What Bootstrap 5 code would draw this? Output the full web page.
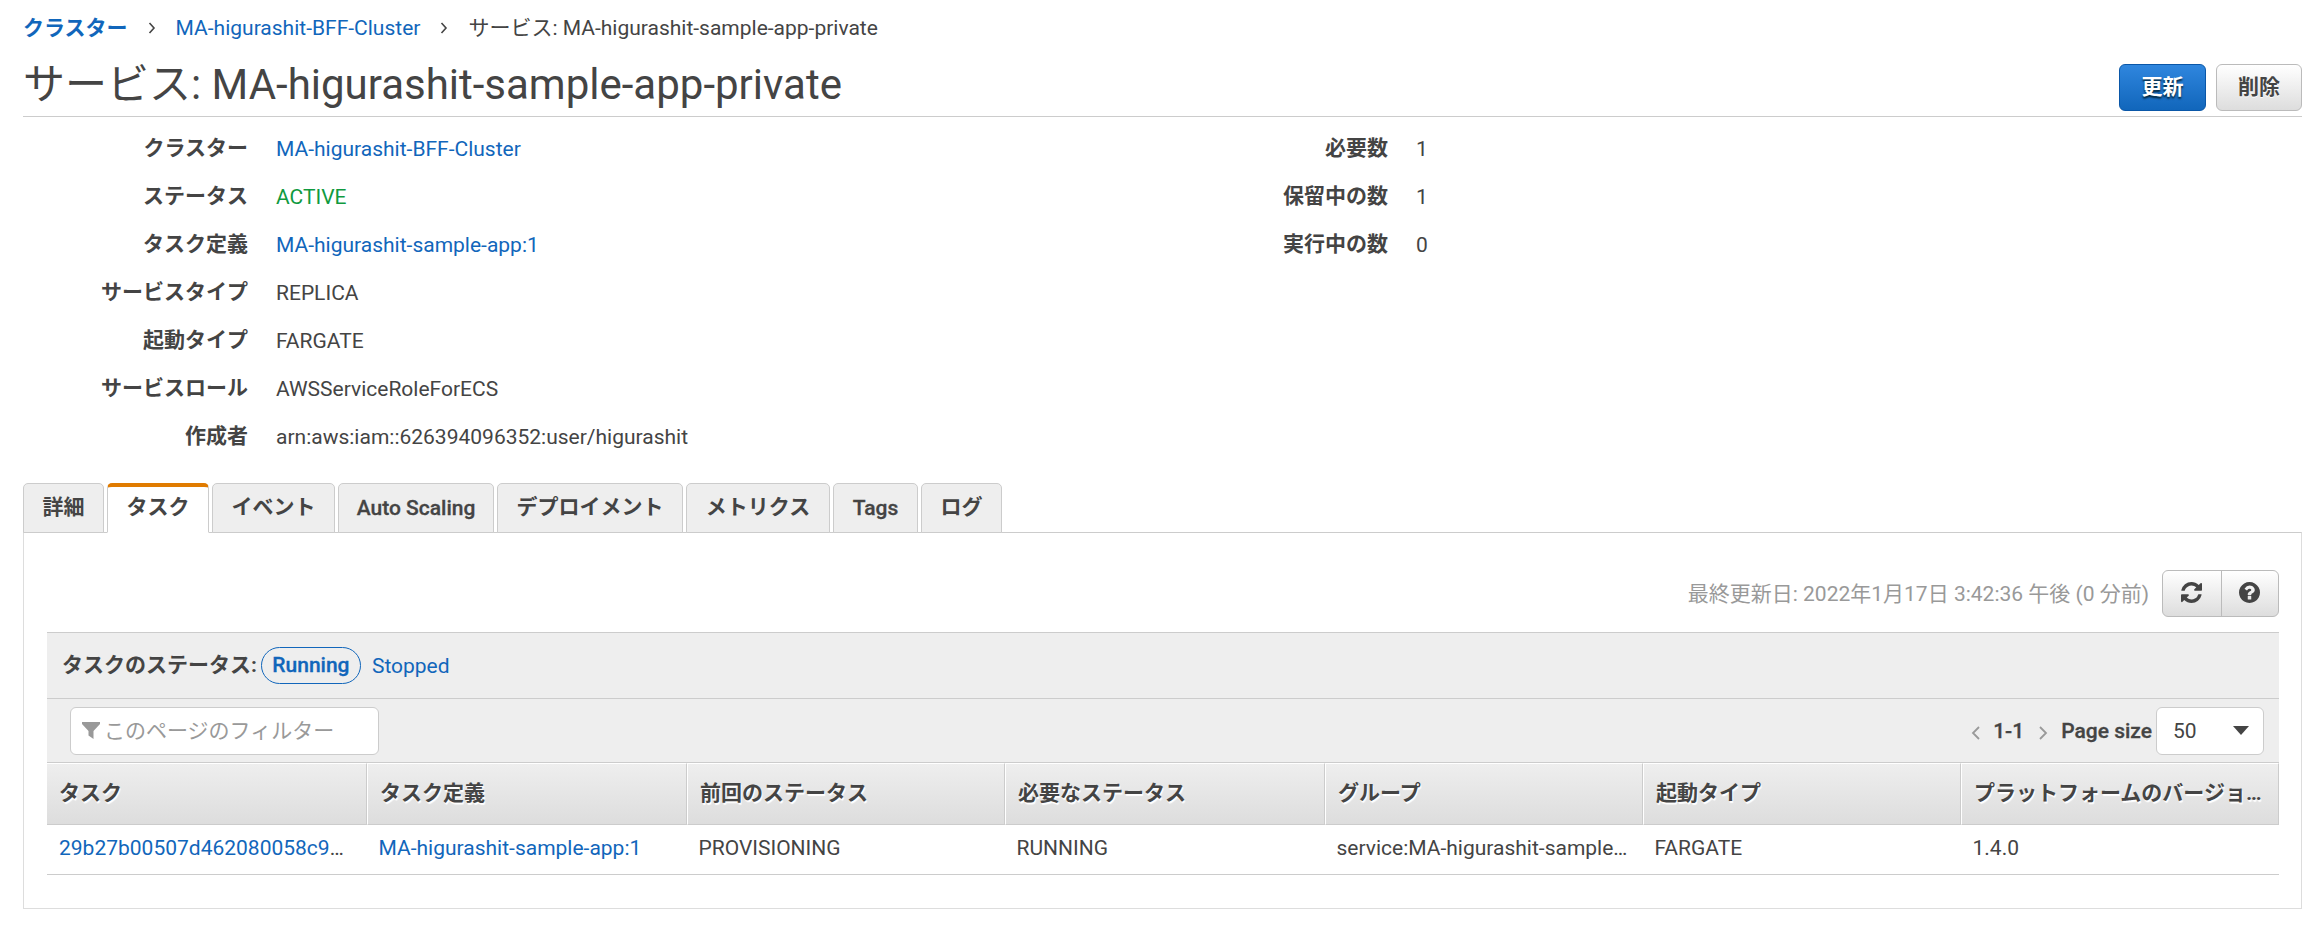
<!DOCTYPE html>
<html lang="ja">
<head>
<meta charset="utf-8">
<meta name="viewport" content="width=device-width, initial-scale=1">
<title>サービス: MA-higurashit-sample-app-private</title>
<link href="https://cdn.jsdelivr.net/npm/bootstrap@5.3.0/dist/css/bootstrap.min.css" rel="stylesheet">
<style>
body{font-family:Roboto,"Noto Sans CJK JP",sans-serif;font-size:21px;line-height:30px;color:#444;background:#fff;overflow:hidden}
a{color:#1166bb;text-decoration:none}
.page{padding:0 6px 0 23px}
.crumbs{height:56px;padding-top:13px}
.crumbs .sep{width:48px;height:30px;display:flex;justify-content:center;align-items:center}
.title-bar{height:61px;border-bottom:1px solid #ccc}
.title-bar h1{font-size:42px;line-height:56px;font-weight:400;margin:0;padding-top:1px}
.aws-btn{height:47px;border:1px solid #bbb;border-radius:6px;background:linear-gradient(#fff,#ddd);color:#444;font-size:21px;font-weight:700;line-height:1;padding:0 21px;text-shadow:0 1px 0 #fff}
.aws-btn.main{width:87px;margin-right:10px;border-color:#0a57a8;background:linear-gradient(#2f86de,#1166bb);color:#fff;text-shadow:0 2px 2px #023}
.facts{padding-top:8px;height:366px}
.facts dl{margin:0}
.facts dt,.facts dd{height:48px;line-height:48px;margin:0}
.facts dt{text-align:right;width:225px;flex:none;line-height:46px}
.facts dd{padding-left:28px}
.c-left{width:1140px}
.ok{color:#109a3f}
.med{font-weight:500;-webkit-text-stroke:.3px}
.svc-tabs{gap:3px;height:50px;margin-bottom:-1px;border:0}
.svc-tabs a{border:1px solid #ccc;border-radius:5px 5px 0 0;background:#eee;color:#444;font-weight:700;height:50px;line-height:46px;padding:0;text-align:center}
.svc-tabs a.med{font-weight:500;line-height:48px}
.svc-tabs a.active{background:#fff;border-top:4px solid #e07b00;border-bottom-color:#fff;line-height:41px}
.panel{border:1px solid #ddd;border-top-color:#ccc;height:377px;padding:37px 22px 0 23px}
.muted{color:#999}
.duo{width:117px;margin-left:13px;border:1px solid #bbb;border-radius:6px;background:linear-gradient(#fff,#ddd);height:47px}
.duo span{display:flex;align-items:center;justify-content:center;width:58px}
.duo span+span{border-left:1px solid #bbb}
.duo svg{margin-top:-2px}
.bar{background:#eee;border-top:1px solid #ccc}
.bar-a{height:66px;padding:0 0 1px 15px;margin-top:15px}
.bar-a .dn{padding-top:1px}
.bar-b{height:64px;padding:0 15px 0 23px}
.pill{border:1px solid #1166bb;border-radius:19px;height:37px;line-height:35px;width:100px;text-align:center;margin:0 11px 0 4px}
.field{background:#fff;border:1px solid #ccc;border-radius:6px;height:48px}
.grid-t{table-layout:fixed;border-collapse:separate;border-spacing:0;width:2232px;margin:0;border-top:1px solid #ccc}
.grid-t th,.grid-t td{white-space:nowrap;padding:0 0 0 12px}
.grid-t th{height:62px;background:linear-gradient(#eee,#ddd);border-top:1px solid #fff;border-bottom:1px solid #ccc;border-right:1px solid #ccc;text-shadow:1px 2px 1px #fff;line-height:56px;padding-bottom:2px}
.grid-t th+th{border-left:1px solid #fff}
.grid-t td{height:50px;border-bottom:1px solid #ccc;padding-bottom:3px}
.grid-t td+td{padding-left:11.5px}
.grid-t tr>:nth-child(-n+2){width:320px}
.grid-t tr>:nth-child(4){width:320px}
</style>
<script src="https://cdn.jsdelivr.net/npm/bootstrap@5.3.0/dist/js/bootstrap.bundle.min.js"></script>
</head>
<body>
<main class="page">
  <nav class="crumbs d-flex">
    <a href="#" class="fw-bold">クラスター</a>
    <span class="sep"><svg width="8" height="12" fill="none" stroke="#444" stroke-width="1.6"><path d="M1.5 1l4.500 5-4.500 5"/></svg></span>
    <a href="#">MA-higurashit-BFF-Cluster</a>
    <span class="sep"><svg width="8" height="12" fill="none" stroke="#444" stroke-width="1.6"><path d="M1.5 1l4.500 5-4.500 5"/></svg></span>
    <span>サービス: MA-higurashit-sample-app-private</span>
  </nav>
  <header class="title-bar d-flex justify-content-between">
    <h1>サービス: MA-higurashit-sample-app-private</h1>
    <div class="d-flex pt-2"><button class="aws-btn main">更新</button><button class="aws-btn">削除</button></div>
  </header>
  <section class="facts d-flex">
    <dl class="c-left">
      <div class="d-flex"><dt>クラスター</dt><dd><a href="#">MA-higurashit-BFF-Cluster</a></dd></div>
      <div class="d-flex"><dt>ステータス</dt><dd class="ok">ACTIVE</dd></div>
      <div class="d-flex"><dt>タスク定義</dt><dd><a href="#">MA-higurashit-sample-app:1</a></dd></div>
      <div class="d-flex"><dt>サービスタイプ</dt><dd>REPLICA</dd></div>
      <div class="d-flex"><dt>起動タイプ</dt><dd>FARGATE</dd></div>
      <div class="d-flex"><dt>サービスロール</dt><dd>AWSServiceRoleForECS</dd></div>
      <div class="d-flex"><dt>作成者</dt><dd>arn:aws:iam::626394096352:user/higurashit</dd></div>
    </dl>
    <dl>
      <div class="d-flex"><dt>必要数</dt><dd>1</dd></div>
      <div class="d-flex"><dt>保留中の数</dt><dd>1</dd></div>
      <div class="d-flex"><dt>実行中の数</dt><dd>0</dd></div>
    </dl>
  </section>
  <nav class="svc-tabs nav">
    <a href="#" style="width:81px">詳細</a>
    <a href="#" class="active" style="width:102px">タスク</a>
    <a href="#" style="width:123px">イベント</a>
    <a href="#" class="med" style="width:156px">Auto Scaling</a>
    <a href="#" style="width:186px">デプロイメント</a>
    <a href="#" style="width:144px">メトリクス</a>
    <a href="#" class="med" style="width:85px">Tags</a>
    <a href="#" style="width:81px">ログ</a>
  </nav>
  <section class="panel">
    <div class="d-flex justify-content-end align-items-center">
      <span class="muted">最終更新日: 2022年1月17日 3:42:36 午後 (0 分前)</span>
      <div class="duo d-flex">
        <span><svg width="21" height="21" viewBox="0 0 1536 1536" fill="#444"><path d="M1511 928q0 5-1 7-64 268-268 434.500T764 1536q-146 0-282.500-55T238 1324l-129 129q-19 19-45 19t-45-19-19-45V960q0-26 19-45t45-19h448q26 0 45 19t19 45-19 45l-137 137q71 66 161 102t187 36q134 0 250-65t186-179q11-17 53-117 8-23 30-23h192q13 0 22.500 9.500t9.500 22.500zm25-800v448q0 26-19 45t-45 19h-448q-26 0-45-19t-19-45 19-45l138-138Q969 256 768 256q-134 0-250 65T332 500q-11 17-53 117-8 23-30 23H50q-13 0-22.500-9.500T18 608v-7q65-268 270-434.500T768 0q146 0 284 55.500T1297 212l130-129q19-19 45-19t45 19 19 45z"/></svg></span>
        <span><svg width="21" height="21" viewBox="0 0 1536 1536" fill="#444"><path d="M896 1248v-192q0-14-9-23t-23-9H672q-14 0-23 9t-9 23v192q0 14 9 23t23 9h192q14 0 23-9t9-23zm256-672q0-88-55.500-163T958 297t-170-41q-243 0-371 213-15 24 8 42l132 100q7 6 19 6 16 0 25-12 53-68 86-92 34-24 86-24 48 0 85.500 26t37.500 59q0 38-20 61t-68 45q-63 28-115.500 86.500T640 892v36q0 14 9 23t23 9h192q14 0 23-9t9-23q0-19 21.500-49.500T972 829q32-18 49-28.500t46-35 44.500-48 28-60.500 12.500-81zm384 192q0 209-103 385.500T1153.500 1433 768 1536t-385.500-103T103 1153.500 0 768t103-385.500T382.500 103 768 0t385.500 103T1433 382.500 1536 768z"/></svg></span>
      </div>
    </div>
    <div class="bar bar-a d-flex align-items-center"><b>タスクのステータス:</b><a href="#" class="pill med">Running</a><a href="#" class="dn">Stopped</a></div>
    <div class="bar bar-b d-flex align-items-center justify-content-between">
      <div class="field muted d-flex align-items-center" style="width:309px;padding-left:11px"><svg width="18" height="17" class="me-1" fill="#999"><path d="M0 0h18v2l-6.500 7v8l-5-3.500V9L0 2z"/></svg><span>このページのフィルター</span></div>
      <div class="d-flex align-items-center">
        <svg width="9" height="14" class="mt-1" fill="none" stroke="#999" stroke-width="1.8"><path d="M8 1L2 7l6 6"/></svg>
        <span class="med" style="margin:0 15px 0 13px">1-1</span>
        <svg width="9" height="14" class="mt-1" fill="none" stroke="#999" stroke-width="1.8"><path d="M1 1l6 6-6 6"/></svg>
        <span class="med" style="margin:0 4px 0 13px">Page size</span>
        <div class="field d-flex align-items-center justify-content-between" style="width:108px;padding:0 14px 0 16px"><span>50</span><svg width="16" height="9" fill="#444"><path d="M0 0h16L8 9z"/></svg></div>
      </div>
    </div>
    <table class="grid-t">
      <thead><tr><th>タスク</th><th>タスク定義</th><th>前回のステータス</th><th>必要なステータス</th><th>グループ</th><th>起動タイプ</th><th>プラットフォームのバージョ…</th></tr></thead>
      <tbody><tr><td><a href="#">29b27b00507d462080058c9</a>…</td><td><a href="#">MA-higurashit-sample-app:1</a></td><td>PROVISIONING</td><td>RUNNING</td><td>service:MA-higurashit-sample…</td><td>FARGATE</td><td>1.4.0</td></tr></tbody>
    </table>
  </section>
</main>
</body>
</html>
